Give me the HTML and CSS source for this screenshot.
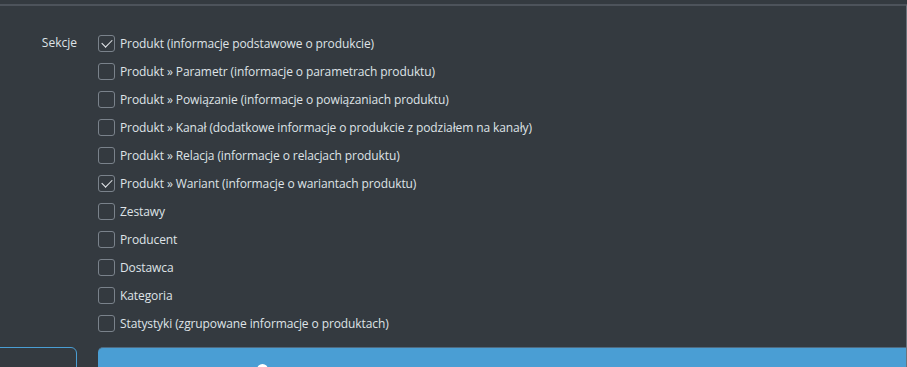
FILE: index.html
```html
<!DOCTYPE html>
<html>
<head>
    <title>Eksport - sekcje</title>
    <link rel="stylesheet" href="styles.css">
</head>
<body>
    <div class="panel">
        <div class="form-row">
            <label class="row-label">Sekcje</label>
            <div class="options">
                <label class="option"><span class="box checked"></span>Produkt (informacje podstawowe o produkcie)</label>
                <label class="option"><span class="box"></span>Produkt » Parametr (informacje o parametrach produktu)</label>
                <label class="option"><span class="box"></span>Produkt » Powiązanie (informacje o powiązaniach produktu)</label>
                <label class="option"><span class="box"></span>Produkt » Kanał (dodatkowe informacje o produkcie z podziałem na kanały)</label>
                <label class="option"><span class="box"></span>Produkt » Relacja (informacje o relacjach produktu)</label>
                <label class="option"><span class="box checked"></span>Produkt » Wariant (informacje o wariantach produktu)</label>
                <label class="option"><span class="box"></span>Zestawy</label>
                <label class="option"><span class="box"></span>Producent</label>
                <label class="option"><span class="box"></span>Dostawca</label>
                <label class="option"><span class="box"></span>Kategoria</label>
                <label class="option"><span class="box"></span>Statystyki (zgrupowane informacje o produktach)</label>
            </div>
        </div>
        <div class="form-row actions">
            <div class="btn-outline"></div>
            <div class="btn-primary">
                <span class="btn-icon"></span>
            </div>
        </div>
    </div>
</body>
</html>
```
FILE: styles.css
```css
body {
    margin: 0;
    background-color: #343a40;
    font-family: "Open Sans", "Noto Sans", sans-serif;
    font-size: 12px;
    color: #dfe3e7;
    height: 367px;
    overflow: hidden;
}

.panel {
    border-top: 2px solid #4d535b;
    border-right: 1px solid #6b737c;
    margin-top: 4px;
    padding-top: 23px;
    height: 363px;
    box-sizing: border-box;
    overflow: hidden;
}

.form-row {
    display: grid;
    grid-template-columns: 77px 1fr;
    column-gap: 21px;
}

.row-label {
    text-align: right;
    height: 28px;
    line-height: 28px;
}

.option {
    display: flex;
    align-items: center;
    height: 28.1px;
    letter-spacing: -0.1px;
}

.box {
    width: 15px;
    height: 15px;
    border: 1px solid #7a828b;
    border-radius: 3px;
    margin-right: 5px;
    position: relative;
    flex-shrink: 0;
}

.box.checked::after {
    content: "";
    position: absolute;
    left: 5px;
    top: 1px;
    width: 5px;
    height: 9px;
    border-right: 1.5px solid #e9ecef;
    border-bottom: 1.5px solid #e9ecef;
    transform: rotate(45deg);
}

.actions {
    margin-top: 9px;
}

.btn-outline {
    margin-left: -10px;
    border: 1px solid #4a9ed4;
    border-radius: 6px;
    height: 40px;
}

.btn-primary {
    background-color: #4a9ed4;
    border-top: 1px solid #4f6a80;
    border-radius: 5px 0 0 0;
    height: 40px;
    padding-left: 159px;
    padding-top: 16px;
    box-sizing: border-box;
}

.btn-icon {
    display: block;
    width: 11px;
    height: 11px;
    border-radius: 50%;
    background-color: #ffffff;
}
```
